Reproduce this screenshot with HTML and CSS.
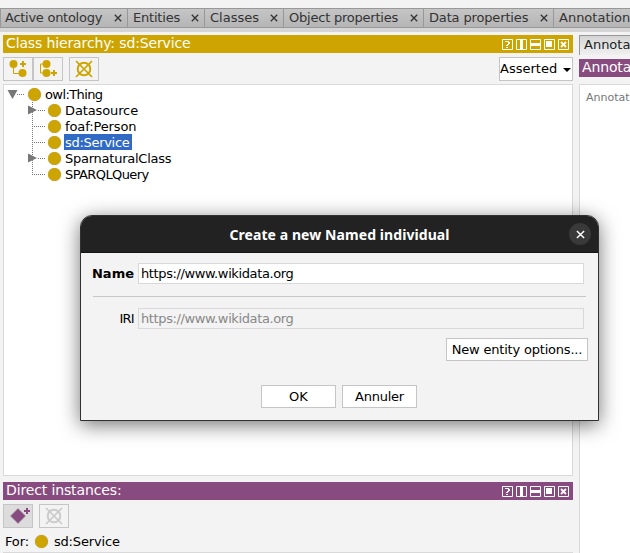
FILE: index.html
```html
<!DOCTYPE html>
<html lang="en">
<head>
<meta charset="utf-8">
<title>Create a new Named individual</title>
<link rel="stylesheet" href="styles.css">
</head>
<body>
<svg class="defs" aria-hidden="true">
  <symbol id="close" viewBox="0 0 8 8"><path d="M.8 .8 7.2 7.2M7.2 .8 .8 7.2" fill="none" stroke="currentColor" stroke-width="1.3"/></symbol>
  <symbol id="controls" viewBox="0 0 67 11">
    <g fill="none" stroke="#fff"><path d="M.5 .5h10v10h-10zM14.5 .5h10v10h-10zM28.5 .5h10v10h-10zM42.5 .5h10v10h-10zM56.5 .5h10v10h-10z"/></g>
    <g fill="#fff"><path d="M3 2h4v1H3zM6 3h2v2H6zM5 5h2v1H5zM4 6h2v1H4zM4 8h2v1H4zM18 1h3v9h-3zM29 4h9v3h-9zM44 2h6v6h-6z"/></g>
    <path d="M59 3l5 5M64 3l-5 5" stroke="#fff" stroke-width="1.8"/>
  </symbol>
  <symbol id="delete" viewBox="0 0 18 18"><g fill="none" stroke="currentColor"><circle cx="9" cy="9" r="6.3" stroke-width="2"/><path d="M1 1 17 17M17 1 1 17" stroke-width="1.7"/></g></symbol>
</svg>
<div class="app">
  <nav class="tabs">
    <div class="tab t1"><span>Active ontology</span><svg><use href="#close"/></svg></div>
    <div class="tab t2"><span>Entities</span><svg><use href="#close"/></svg></div>
    <div class="tab t3"><span>Classes</span><svg><use href="#close"/></svg></div>
    <div class="tab t4"><span>Object properties</span><svg><use href="#close"/></svg></div>
    <div class="tab t5"><span>Data properties</span><svg><use href="#close"/></svg></div>
    <div class="tab t6"><span>Annotation</span></div>
  </nav>
  <main class="work">
    <section class="left">
      <header class="bar gold"><span>Class hierarchy: sd:Service</span><svg class="controls"><use href="#controls"/></svg></header>
      <div class="tools">
        <button class="tool"><svg viewBox="0 0 28 22"><path d="M9.500 6v9.500H16" fill="none" stroke="#cea500"/><circle cx="9.500" cy="6" r="4" fill="#cea500"/><circle cx="18.500" cy="15" r="4" fill="#cea500"/><path d="M16 6h6M19 3v6" stroke="#cea500" stroke-width="2"/></svg></button>
        <button class="tool joined"><svg viewBox="0 0 28 22"><path d="M9 6H6.500v9H9" fill="none" stroke="#cea500"/><circle cx="12.500" cy="6" r="4" fill="#cea500"/><circle cx="12.500" cy="15" r="4" fill="#cea500"/><path d="M17 15h6M20 12v6" stroke="#cea500" stroke-width="2"/></svg></button>
        <button class="tool spaced"><svg class="cross"><use href="#delete"/></svg></button>
        <div class="select"><span>Asserted</span><i></i></div>
      </div>
      <div class="tree">
        <div class="row root"><svg class="branch" viewBox="0 0 21 16"><path d="M10 8.500h8" class="dots"/><path d="M.5 4h10L5.500 13z" fill="#777"/></svg><i class="dot"></i><span class="tight">owl:Thing</span></div>
        <div class="row"><svg class="branch" viewBox="0 0 24 16"><path d="M8.500 0v16M14 8.500h8" class="dots"/><path d="M4 3.500v9L13 8z" fill="#777"/></svg><i class="dot"></i><span class="snug">Datasource</span></div>
        <div class="row"><svg class="branch" viewBox="0 0 24 16"><path d="M8.500 0v16M10 8.500h12" class="dots"/></svg><i class="dot"></i><span class="snug">foaf:Person</span></div>
        <div class="row"><svg class="branch" viewBox="0 0 24 16"><path d="M8.500 0v16M10 8.500h12" class="dots"/></svg><i class="dot"></i><span class="selected">sd:Service</span></div>
        <div class="row"><svg class="branch" viewBox="0 0 24 16"><path d="M8.500 0v16M14 8.500h8" class="dots"/><path d="M4 3.500v9L13 8z" fill="#777"/></svg><i class="dot"></i><span>SparnaturalClass</span></div>
        <div class="row"><svg class="branch" viewBox="0 0 24 16"><path d="M8.500 0v8M8 8.500h14" class="dots"/></svg><i class="dot"></i><span class="tight">SPARQLQuery</span></div>
      </div>
      <header class="bar purple"><span>Direct instances:</span><svg class="controls"><use href="#controls"/></svg></header>
      <div class="tools">
        <button class="tool pressed"><svg viewBox="0 0 28 22"><path d="M14 3.500 21.500 11 14 18.500 6.500 11z" fill="#874b80" stroke="#999" stroke-width=".6"/><path d="M20 6h6M23 3v6" stroke="#874b80" stroke-width="2"/></svg></button>
        <button class="tool spaced disabled"><svg class="cross"><use href="#delete"/></svg></button>
      </div>
      <div class="for"><span>For:</span><i class="dot"></i><span>sd:Service</span></div>
      <div class="list"></div>
    </section>
    <section class="right">
      <div class="subtab">Annotations</div>
      <header class="bar purple">Annotations:</header>
      <div class="notes">Annotations</div>
    </section>
  </main>
</div>
<div class="dialog" role="dialog">
  <header class="title"><span>Create a new Named individual</span><button class="x"><svg><use href="#close"/></svg></button></header>
  <div class="content">
    <div class="field"><label class="strong">Name</label><div class="input">https://www.wikidata.org</div></div>
    <div class="rule"></div>
    <div class="field"><label class="iri">IRI</label><div class="input off">https://www.wikidata.org</div></div>
    <button class="btn options">New entity options...</button>
    <div class="actions"><button class="btn">OK</button><button class="btn cancel">Annuler</button></div>
  </div>
</div>
</body>
</html>
```
FILE: styles.css
```css
* { box-sizing: border-box; }
body { margin: 0; width: 630px; height: 553px; overflow: hidden; background: #f3f3f3; color: #000; font: 13px/16px "DejaVu Sans", sans-serif; }
button { font: inherit; padding: 0; margin: 0; color: inherit; }
.defs { position: absolute; width: 0; height: 0; }
.app { width: 630px; height: 553px; overflow: hidden; padding-top: 8px; }
.tabs { display: flex; height: 24px; border-bottom: 4px solid #d5d5d5; }
.tab { flex: none; display: flex; align-items: center; justify-content: space-between; height: 20px; padding: 0 5px 0 5px; color: #333; background: linear-gradient(#c5c5c5, #b5b5b5); border: 1px solid #989898; border-left-width: 0; white-space: nowrap; }
.tab svg { width: 8px; height: 8px; }
.t1 { width: 128px; border-left-width: 1px; padding-left: 4px; letter-spacing: -.27px; }
.t2 { width: 77px; letter-spacing: -.2px; }
.t3 { width: 79px; }
.t4 { width: 140px; letter-spacing: -.22px; }
.t5 { width: 130px; letter-spacing: -.15px; }
.t6 { width: 160px; }
.work { display: flex; gap: 6px; height: 521px; padding: 3px 0 0 3px; }
.left { width: 570px; flex: none; }
.right { flex: none; width: 160px; }
.bar { display: flex; align-items: center; justify-content: space-between; height: 18px; padding: 0 4px 2px 3px; color: #fff; font-size: 14px; letter-spacing: -.13px; white-space: nowrap; }
.gold { background: #cea500; }
.purple { background: #874b80; }
.controls { width: 67px; height: 11px; margin-top: 2px; }
.tools { display: flex; height: 24px; margin-top: 4px; }
.tool { display: flex; align-items: center; justify-content: center; width: 30px; height: 24px; border: 1px solid #c5c5c5; background: #f3f3f3; }
.tool svg { width: 28px; height: 22px; }
.tool .cross { width: 18px; height: 18px; color: #cea500; }
.spaced { margin-left: 6px; }
.pressed { background: #dcdcdc; }
.disabled .cross { color: #cbcbcb; }
.select { display: flex; align-items: center; justify-content: space-between; margin-left: auto; width: 74px; border: 1px solid #c5c5c5; background: #fff; padding-right: 1px; }
.select i { border: 4.5px solid transparent; border-top-color: #000; border-bottom: 0; margin-top: 2px; }
.tree { height: 392px; margin-top: 3px; padding: 1px 3px; border: 1px solid #d9d9d9; background: #fff; }
.row { display: flex; align-items: center; height: 16px; padding-left: 17px; }
.root { padding-left: 0; }
.branch { width: 24px; height: 16px; flex: none; }
.root .branch { width: 21px; }
.dots { fill: none; stroke: #777; stroke-dasharray: 1 1; }
.dot { flex: none; width: 13px; height: 13px; border-radius: 50%; background: #cea500; box-shadow: 0 0 1px #999; }
.row .dot { margin-right: 3px; }
.row span { padding: 1px 3px 0 1px; height: 16px; line-height: 16px; letter-spacing: -.25px; }
.row .snug { letter-spacing: -.12px; }
.row .tight { letter-spacing: -.6px; }
.row .selected { background: #316ac5; color: #fff; letter-spacing: -.3px; }
.tree + .bar { margin-top: 6px; }
.for { display: flex; align-items: center; height: 24px; padding: 3px 2px 0; letter-spacing: -.15px; }
.for .dot { margin: -1px 6px 0 6px; }
.list { border-top: 1px solid #d9d9d9; background: #fff; height: 20px; }
.subtab { height: 20px; border: 1px solid #989898; border-bottom: 0; background: linear-gradient(#d5d5d5, #f0f0f0); padding-left: 4px; color: #222; line-height: 18px; }
.right .bar { margin-top: 4px; padding-left: 3px; }
.notes { height: 490px; margin-top: 7px; border: 1px solid #d9d9d9; background: #fff; color: #777; font-size: 11px; padding: 5px 6px; }
.dialog { position: absolute; left: 80px; top: 215px; width: 519px; height: 206px; border: 1px solid #303030; border-radius: 12px 12px 0 0; overflow: hidden; background: #f3f3f3; box-shadow: 0 4px 20px rgba(0,0,0,.55); }
.title { display: flex; align-items: center; justify-content: center; height: 37px; background: #222; border-bottom: 1px solid #171217; color: #fff; font: bold 14px/20px "Noto Sans", sans-serif; letter-spacing: .08px; padding-top: 2px; }
.x { position: absolute; right: 7px; top: 7px; width: 22px; height: 22px; border: 0; border-radius: 50%; background: #393939; color: #fff; display: flex; align-items: center; justify-content: center; }
.x svg { width: 9px; height: 9px; }
.content { padding: 10px 10px 0 9px; }
.field { display: flex; align-items: center; height: 21px; }
.field label { width: 44px; margin-right: 4px; text-align: right; }
.strong { font-weight: bold; }
.field .iri { letter-spacing: -.7px; }
.input { width: 446px; height: 21px; border: 1px solid #d9d9d9; background: #fff; padding-left: 2px; line-height: 20px; letter-spacing: -.38px; }
.off { background: #f3f3f3; color: #888; }
.rule { height: 1px; margin: 12px 2px 11px 3px; background: #c7c7c7; }
.btn { width: 75px; height: 23px; border: 1px solid #c5c5c5; background: #fff; line-height: 19px; }
.options { display: block; width: 142px; margin: 9px 0 0 356px; letter-spacing: -.2px; }
.cancel { letter-spacing: -.25px; }
.actions { display: flex; gap: 6px; margin: 24px 0 0 171px; }
```
